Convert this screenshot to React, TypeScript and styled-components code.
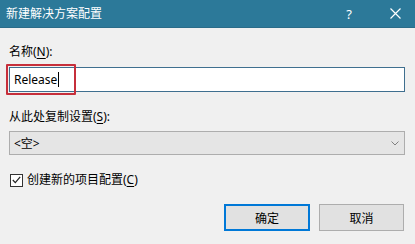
import React from 'react'
import styled, { createGlobalStyle } from 'styled-components'

const GlobalStyle = createGlobalStyle`
    html, body {
        margin: 0;
        padding: 0;
        background: #f0f0f0;
    }
    body {
        font-family: "Noto Sans", "Noto Sans CJK SC", sans-serif;
        font-size: 12px;
        color: #000;
    }
`

const UI_FONT = `"Noto Sans", "Noto Sans CJK SC", sans-serif`

const Dialog = styled.div`
    width: 415px;
    height: 244px;
    background: #f0f0f0;
    display: flex;
    flex-direction: column;
    overflow: hidden;
`

const TitleBar = styled.div`
    height: 27px;
    background: #2c7999;
    border-bottom: 1px solid #2a6c89;
    display: flex;
    align-items: center;
    color: #fff;
    padding-left: 6px;
`

const Title = styled.div`
    flex: 1;
    font-size: 12px;
    font-family: ${UI_FONT};
    line-height: 16px;
`

const TitleButton = styled.div<{ $w: number }>`
    width: ${p => p.$w}px;
    height: 27px;
    display: flex;
    align-items: center;
    justify-content: center;
    font-size: 13px;
`

const Body = styled.div`
    display: flex;
    flex-direction: column;
    padding: 16px 10px 0 9px;
`

const Label = styled.div<{ $gap?: number }>`
    font-family: ${UI_FONT};
    font-size: 12px;
    line-height: 16px;
    margin-top: ${p => p.$gap ?? 0}px;
    & u { text-underline-offset: 2px; }
`

const FieldWrap = styled.div`
    position: relative;
    margin-top: 7px;
`

const TextBox = styled.div`
    height: 23px;
    border: 1px solid #3f6f8f;
    background: #fff;
    display: flex;
    align-items: center;
    padding-left: 4px;
    font-family: ${UI_FONT};
    font-size: 12px;
`

const Caret = styled.span`
    display: inline-block;
    width: 1px;
    height: 15px;
    background: #000;
    margin-left: 1px;
`

const Highlight = styled.div`
    position: absolute;
    left: -3px;
    top: -3px;
    width: 66px;
    height: 27px;
    border: 2px solid #c62f3b;
    border-radius: 1px;
    pointer-events: none;
`

const Combo = styled.div`
    margin-top: 6px;
    height: 22px;
    border: 1px solid #adadad;
    background: #e5e5e5;
    display: flex;
    align-items: center;
    justify-content: space-between;
    padding: 0 5px 0 4px;
    font-family: ${UI_FONT};
    font-size: 12px;
`

const CheckRow = styled.label`
    margin-top: 17px;
    display: flex;
    align-items: center;
    gap: 4px;
    padding-left: 1px;
    font-family: ${UI_FONT};
    font-size: 12px;
    line-height: 16px;
    & u { text-underline-offset: 2px; }
`

const Box = styled.span`
    width: 11px;
    height: 11px;
    border: 1px solid #333;
    background: #fff;
    display: flex;
    align-items: center;
    justify-content: center;
`

const ButtonRow = styled.div`
    margin-top: 16px;
    display: flex;
    justify-content: flex-end;
    gap: 9px;
    padding-right: 1px;
`

const Button = styled.div<{ $default?: boolean }>`
    width: ${p => (p.$default ? 82 : 83)}px;
    height: ${p => (p.$default ? 23 : 25)}px;
    border: ${p => (p.$default ? '2px solid #0078d7' : '1px solid #adadad')};
    background: #e1e1e1;
    display: flex;
    align-items: center;
    justify-content: center;
    font-family: ${UI_FONT};
    font-size: 12px;
`

export default function App() {
    return (
        <Dialog>
            <GlobalStyle />
            <TitleBar>
                <Title>新建解决方案配置</Title>
                <TitleButton $w={52}>?</TitleButton>
                <TitleButton $w={40}>
                    <svg width="11" height="11" viewBox="0 0 11 11">
                        <path d="M0.5 0.5 L10.5 10.5 M10.5 0.5 L0.5 10.5" stroke="#fff" strokeWidth="1.2" fill="none" />
                    </svg>
                </TitleButton>
            </TitleBar>
            <Body>
                <Label>名称(<u>N</u>):</Label>
                <FieldWrap>
                    <TextBox>Release<Caret /></TextBox>
                    <Highlight />
                </FieldWrap>
                <Label $gap={17}>从此处复制设置(<u>S</u>):</Label>
                <Combo>
                    <span>&lt;空&gt;</span>
                    <svg width="8" height="5" viewBox="0 0 8 5">
                        <path d="M0.5 0.5 L4 4 L7.5 0.5" stroke="#808080" strokeWidth="1" fill="none" />
                    </svg>
                </Combo>
                <CheckRow>
                    <Box>
                        <svg width="9" height="8" viewBox="0 0 9 8">
                            <path d="M0.8 4 L3.3 6.6 L8.2 0.8" stroke="#222" strokeWidth="1.2" fill="none" />
                        </svg>
                    </Box>
                    <span>创建新的项目配置(<u>C</u>)</span>
                </CheckRow>
                <ButtonRow>
                    <Button $default>确定</Button>
                    <Button>取消</Button>
                </ButtonRow>
            </Body>
        </Dialog>
    )
}
